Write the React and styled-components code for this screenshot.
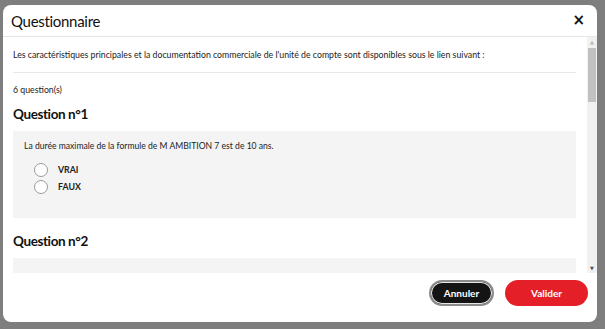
import React from "react";
import styled, { createGlobalStyle } from "styled-components";

const Global = createGlobalStyle`
  html, body {
    margin: 0;
    padding: 0;
    background: #7e7e7e;
    font-family: Lato, "Open Sans", sans-serif;
    overflow: hidden;
  }
`;

//the dimmed page behind the dialog
const Backdrop = styled.div`
  width: 605px;
  height: 329px;
  background: #7e7e7e;
  padding: 5px 8px 7px 3px;
  box-sizing: border-box;
`;

const Modal = styled.div`
  width: 594px;
  height: 317px;
  background: #fff;
  border-radius: 8px;
  display: flex;
  flex-direction: column;
  overflow: hidden;
`;

const Header = styled.div`
  height: 31px;
  flex-shrink: 0;
  display: flex;
  align-items: center;
  justify-content: space-between;
  padding: 0 12px 0 8px;
  border-bottom: 1px solid #e6e6e6;
  h1 {
    margin: 0;
    font-size: 15px;
    font-weight: 400;
    letter-spacing: -0.3px;
    color: #111;
  }
`;

const Close = styled.button`
  border: none;
  background: none;
  padding: 0;
  font-size: 15px;
  font-weight: 700;
  color: #111;
  line-height: 1;
  font-family: "DejaVu Sans", sans-serif;
`;

const Body = styled.div`
  flex: 1;
  min-height: 0;
  display: flex;
`;

const Content = styled.div`
  flex: 1;
  overflow: hidden;
  padding: 0 11px 0 10px;
`;

//scrollbar drawn by hand, the headless browser hides native ones
const Track = styled.div`
  width: 10px;
  flex-shrink: 0;
  background: #f1f1f1;
  display: flex;
  flex-direction: column;
  align-items: center;
`;

const Arrow = styled.span`
  height: 10px;
  font-size: 5px;
  line-height: 10px;
  color: ${p => p.$dim ? "#b5b5b5" : "#505050"};
  font-family: "DejaVu Sans", sans-serif;
`;

const Thumb = styled.div`
  width: 8px;
  height: 54px;
  background: #c1c1c1;
  margin-top: 1px;
`;

const Spacer = styled.div`
  flex: 1;
`;

const Intro = styled.p`
  margin: 0;
  padding: 12px 0 12px;
  font-size: 8.75px;
  color: #222;
  border-bottom: 1px solid #e8e8e8;
`;

const Count = styled.p`
  margin: 0;
  padding: 11px 0 0;
  font-size: 8.75px;
  color: #222;
`;

const QTitle = styled.h2`
  margin: 0;
  padding: ${p => p.$first ? "11px" : "15px"} 0 9px;
  font-size: 13.5px;
  font-weight: 700;
  letter-spacing: -0.4px;
  color: #111;
`;

const QBox = styled.div`
  background: #f4f4f4;
  padding: 10px 11px;
  height: ${p => p.$h}px;
  box-sizing: border-box;
  p {
    margin: 0 0 10px;
    font-size: 8.6px;
    color: #222;
  }
`;

const Option = styled.label`
  display: flex;
  align-items: center;
  gap: 10px;
  padding-left: 10px;
  height: 17px;
  font-size: 8.8px;
  font-weight: 700;
  color: #222;
`;

const Radio = styled.span`
  width: 12px;
  height: 12px;
  border-radius: 50%;
  border: 1px solid #9a9a9a;
  background: #fff;
`;

const Footer = styled.div`
  height: 49px;
  flex-shrink: 0;
  display: flex;
  align-items: flex-start;
  justify-content: flex-end;
  gap: 11px;
  padding: 7px 9px 0 0;
  box-sizing: border-box;
`;

const Button = styled.button`
  height: 26px;
  width: ${p => p.$w}px;
  border-radius: 13px;
  font-family: Lato, sans-serif;
  font-size: 10px;
  font-weight: 700;
  color: #fff;
  background: ${p => p.$dark ? "#141414" : "#e41f27"};
  border: ${p => p.$dark ? "2px solid #8c8c8c" : "none"};
  box-shadow: ${p => p.$dark ? "inset 0 0 0 1px #e6e6e6" : "none"};
`;

const questions = [
  {
    title: "Question n°1",
    text: "La durée maximale de la formule de M AMBITION 7 est de 10 ans.",
    options: ["VRAI", "FAUX"],
  },
  { title: "Question n°2", text: "", options: [] },
];

export default function App() {
  return (
    <>
      <Global />
      <Backdrop>
        <Modal>
          <Header>
            <h1>Questionnaire</h1>
            <Close>×</Close>
          </Header>
          <Body>
            <Content>
              <Intro>
                Les caractéristiques principales et la documentation commerciale de l'unité de compte sont disponibles sous le lien suivant :
              </Intro>
              <Count>6 question(s)</Count>
              {questions.map((q, i) => (
                <div key={q.title}>
                  <QTitle $first={i === 0}>{q.title}</QTitle>
                  <QBox $h={87}>
                    {q.text && <p>{q.text}</p>}
                    {q.options.map(o => (
                      <Option key={o}>
                        <Radio />
                        {o}
                      </Option>
                    ))}
                  </QBox>
                </div>
              ))}
            </Content>
            <Track>
              <Arrow $dim>▲</Arrow>
              <Thumb />
              <Spacer />
              <Arrow>▼</Arrow>
            </Track>
          </Body>
          <Footer>
            <Button $dark $w={65}>Annuler</Button>
            <Button $w={83}>Valider</Button>
          </Footer>
        </Modal>
      </Backdrop>
    </>
  );
}
